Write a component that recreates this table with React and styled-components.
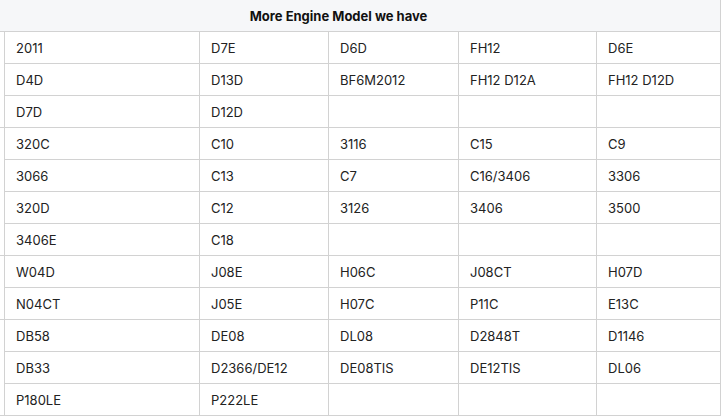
import React from "react";
import styled, { createGlobalStyle } from "styled-components";

const GlobalStyle = createGlobalStyle`
  body {
    margin: 0;
    background: #fff;
    font-family: Inter, "Noto Sans", sans-serif;
  }
`;

// clips the table the way the page was scrolled in the screenshot
const Viewport = styled.div`
  width: 723px;
  height: 419px;
  overflow: hidden;
`;

const Table = styled.table`
  border-collapse: collapse;
  table-layout: fixed;
  width: 765px;
  margin: -1px 0 0 -44px;
  font-size: 13px;
  color: #222;
`;

const HeadCell = styled.th`
  height: 31px;
  padding: 0;
  background: #f6f7f9;
  border: 1px solid #d2d2d2;
  font-weight: 700;
  font-size: 13px;
  color: #111;
  text-align: center;
`;

const Cell = styled.td`
  height: 31px;
  padding: 0 11px;
  border: 1px solid #d2d2d2;
  white-space: nowrap;
  text-align: left;
`;

const BrandCell = styled(Cell)`
  padding: 0;
`;

const widths = [48, 195, 129, 130, 138, 124];

const groups = [
  [
    ["2011", "D7E", "D6D", "FH12", "D6E"],
    ["D4D", "D13D", "BF6M2012", "FH12 D12A", "FH12 D12D"],
    ["D7D", "D12D", "", "", ""],
  ],
  [
    ["320C", "C10", "3116", "C15", "C9"],
    ["3066", "C13", "C7", "C16/3406", "3306"],
    ["320D", "C12", "3126", "3406", "3500"],
    ["3406E", "C18", "", "", ""],
  ],
  [
    ["W04D", "J08E", "H06C", "J08CT", "H07D"],
    ["N04CT", "J05E", "H07C", "P11C", "E13C"],
  ],
  [
    ["DB58", "DE08", "DL08", "D2848T", "D1146"],
    ["DB33", "D2366/DE12", "DE08TIS", "DE12TIS", "DL06"],
    ["P180LE", "P222LE", "", "", ""],
  ],
];

export default function App() {
  return (
    <Viewport>
      <GlobalStyle />
      <Table>
        <colgroup>
          {widths.map((w, i) => (
            <col key={i} style={{ width: w }} />
          ))}
        </colgroup>
        <thead>
          <tr>
            <HeadCell colSpan={6}>More Engine Model we have</HeadCell>
          </tr>
        </thead>
        <tbody>
          {groups.map((rows, g) =>
            rows.map((row, r) => (
              <tr key={`${g}-${r}`}>
                {r === 0 && <BrandCell rowSpan={rows.length} />}
                {row.map((m, c) => (
                  <Cell key={c}>{m}</Cell>
                ))}
              </tr>
            ))
          )}
        </tbody>
      </Table>
    </Viewport>
  );
}
